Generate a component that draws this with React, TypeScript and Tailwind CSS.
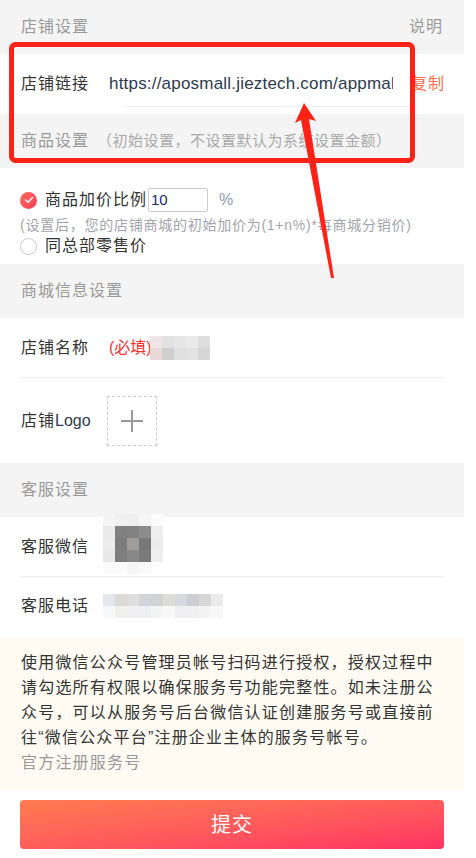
import React from "react";

const cjk = "font-['Liberation_Sans','Noto_Sans_CJK_SC',sans-serif]";

const nameBlur = [
  ["#f0e4e4", "#e2e2e2", "#e6e6e6", "#eaeaea", "#dedede"],
  ["#e8d8d8", "#cfcfcf", "#e0e0e0", "#e2e2e2", "#d6d6d6"],
];

const qrBlur = [
  ["#f4f4f4", "#f0f0f0", "#eeeeee", "#f6f6f6", "#fbfbfb"],
  ["#eaeaea", "#808080", "#828282", "#8c8c8c", "#eeeeee"],
  ["#ececec", "#7c7c7c", "#a09c9a", "#787878", "#ececec"],
  ["#e8e8e8", "#7e7e7e", "#888888", "#7a7a7a", "#eeeeee"],
  ["#fafafa", "#fafafa", "#f5f5f5", "#fafafa", "#ffffff"],
];

const phoneBlur = [
  ["#e4e8ee", "#dcdad6", "#dedede", "#d2d4d8", "#d0d2d4", "#dcdcd8", "#d6d8dc", "#cccdd2", "#d6d6d6", "#eaeaea"],
  ["#f6f8fa", "#f0f0ee", "#f0f0f0", "#eeeff0", "#f4f4f4", "#f8f8f8", "#f0f0f2", "#f0f0f0", "#f4f4f4", "#f8f8f8"],
];

function Mosaic({ rows }: { rows: string[][] }) {
  return (
    <div className="relative flex flex-col blur-[0.6px]">
      {rows.map((row, i) => (
        <div key={i} className="flex">
          {row.map((c, j) => (
            <div key={j} className="w-[12px] h-[12px]" style={{ backgroundColor: c }} />
          ))}
        </div>
      ))}
    </div>
  );
}

function SectionHead({ children, right }: { children: React.ReactNode; right?: string }) {
  return (
    <div className="h-[54px] bg-[#f4f4f4] pl-[21px] pr-[21px] flex items-center justify-between text-[16px] tracking-[1px] text-[#9a9a9a]">
      <div>{children}</div>
      {right && <div>{right}</div>}
    </div>
  );
}

export default function App() {
  return (
    <div className={`relative w-[476px] min-h-[858px] bg-white ${cjk}`}>
      <div className="w-[464px]">
        <SectionHead right="说明">店铺设置</SectionHead>

        {/* store link */}
        <div className="h-[60px] flex items-center pl-[21px] pr-[20px] text-[16px] text-[#333]">
          <div className="w-[88px] shrink-0 tracking-[1px]">店铺链接</div>
          <div className="relative w-[302px] shrink-0 h-full flex items-center">
            <div className="w-[284px] overflow-hidden">
              <span className="font-['Liberation_Sans',sans-serif] text-[17px] tracking-[0.2px] text-[#2d3a4d] whitespace-nowrap">
                https://aposmall.jieztech.com/appmall
              </span>
            </div>
            <div className="absolute left-[16px] right-0 bottom-[7px] h-px bg-[#eeeeee]" />
          </div>
          <div className="ml-auto shrink-0 text-right text-[#ff6e4a] tracking-[1px]">复制</div>
        </div>

        <SectionHead>
          商品设置<span className="ml-[8px] text-[15px] tracking-[0.5px] text-[#aaaaaa]">（初始设置，不设置默认为系统设置金额）</span>
        </SectionHead>

        {/* price setting */}
        <div className="pt-[20px] pb-[8px] pl-[20px] pr-[20px]">
          <div className="flex items-center h-[24px]">
            <div className="w-[17px] h-[17px] rounded-full bg-gradient-to-br from-[#ff6a5a] to-[#ff3a5a] flex items-center justify-center">
              <svg width="10" height="8" viewBox="0 0 10 8" fill="none">
                <path d="M1.5 4 L4 6.3 L8.5 1.5" stroke="white" strokeWidth="1.4" strokeLinecap="round" strokeLinejoin="round" />
              </svg>
            </div>
            <span className="ml-[8px] text-[16px] tracking-[1px] text-[#333]">商品加价比例</span>
            <div className="ml-[1px] w-[60px] h-[24px] border border-[#cccccc] rounded-[2px] flex items-center pl-[2px] text-[15px] text-[#1a2a6a] font-['Liberation_Sans',sans-serif]">
              10
            </div>
            <span className="ml-[11px] text-[16px] text-[#8c9bb0] font-['Liberation_Sans',sans-serif]">%</span>
          </div>
          <div className="mt-[2px] text-[14px] leading-[22px] tracking-[0.75px] text-[#a3a3ab] whitespace-nowrap">
            (设置后，您的店铺商城的初始加价为(1+n%)*每商城分销价)
          </div>
          <div className="flex items-center h-[20px]">
            <div className="w-[17px] h-[17px] rounded-full border border-[#c8c8c8] bg-white" />
            <span className="ml-[8px] text-[16px] tracking-[1px] text-[#333]">同总部零售价</span>
          </div>
        </div>

        <SectionHead>商城信息设置</SectionHead>

        {/* store name */}
        <div className="pl-[20px] pr-[20px]">
          <div className="h-[60px] flex items-center border-b border-[#eeeeee]">
            <div className="w-[89px] pl-px shrink-0 text-[16px] tracking-[1px] text-[#333]">店铺名称</div>
            <span className="w-[41px] shrink-0 whitespace-nowrap text-[16px] text-[#ff3030]">(必填)</span>
            <Mosaic rows={nameBlur} />
          </div>
          <div className="h-[85px] flex items-center">
            <div className="w-[87px] pl-px shrink-0 text-[16px] text-[#333]">
              <span className="tracking-[1px]">店铺</span>
              <span className="font-['Liberation_Sans',sans-serif] text-[#2d3a4d]">Logo</span>
            </div>
            <div className="w-[50px] h-[50px] border border-dashed border-[#cccccc] flex items-center justify-center">
              <svg width="22" height="22" viewBox="0 0 22 22">
                <path d="M11 0 V22 M0 11 H22" stroke="#999" strokeWidth="2" />
              </svg>
            </div>
          </div>
        </div>

        <SectionHead>客服设置</SectionHead>

        {/* service */}
        <div className="pl-[20px] pr-[20px]">
          <div className="h-[60px] flex items-center border-b border-[#eeeeee]">
            <div className="w-[83px] pl-px shrink-0 text-[16px] tracking-[1px] text-[#333]">客服微信</div>
            <div className="-mt-[6px]">
              <Mosaic rows={qrBlur} />
            </div>
          </div>
          <div className="h-[57px] flex items-center">
            <div className="w-[83px] pl-px shrink-0 text-[16px] tracking-[1px] text-[#333]">客服电话</div>
            <Mosaic rows={phoneBlur} />
          </div>
        </div>

        {/* notice */}
        <div className="mt-[4px] bg-[#fffbf2] pt-[12px] pb-[14px] pl-[21px] pr-[26px]">
          <p className="text-[16px] leading-[25px] tracking-[1.2px] text-[#333]">
            使用微信公众号管理员帐号扫码进行授权，授权过程中请勾选所有权限以确保服务号功能完整性。如未注册公众号，可以从服务号后台微信认证创建服务号或直接前往“微信公众平台”注册企业主体的服务号帐号。
          </p>
          <div className="text-[16px] leading-[25px] tracking-[1.2px] text-[#999]">官方注册服务号</div>
        </div>

        {/* submit */}
        <div className="pt-[11px] pl-[20px] pr-[20px]">
          <button className="w-full h-[49px] rounded-[4px] bg-gradient-to-br from-[#ff7b50] to-[#ff3064] text-white text-[20px] tracking-[1px]">
            提交
          </button>
        </div>
      </div>

      {/* annotation overlay */}
      <svg className="absolute left-0 top-0 pointer-events-none" width="476" height="858" viewBox="0 0 476 858">
        <rect x="11.5" y="44.5" width="401" height="116" rx="4" fill="none" stroke="#ff2216" strokeWidth="5" />
        <polygon points="304,103 295,123 301,120 331,278 334,278 309,119 316,121" fill="#ff2216" />
      </svg>
    </div>
  );
}
